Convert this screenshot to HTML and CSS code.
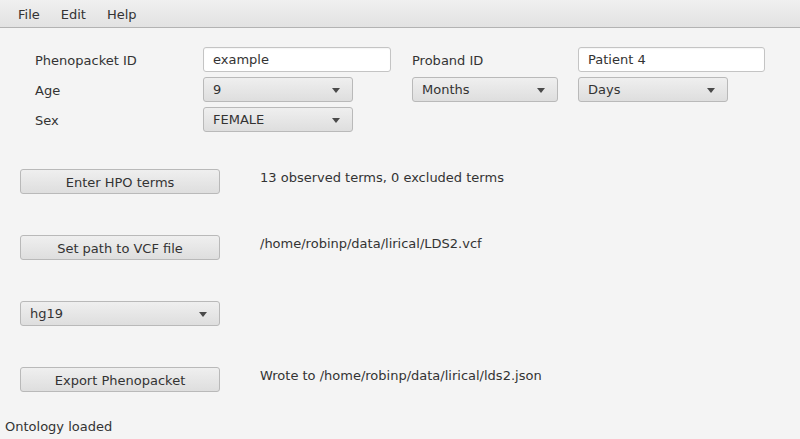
FILE: index.html
```html
<!DOCTYPE html>
<html>
<head>
<meta charset="utf-8">
<link rel="stylesheet" href="styles.css">
</head>
<body>
<div class="window">
  <div class="menubar">
    <span class="menu">File</span>
    <span class="menu">Edit</span>
    <span class="menu">Help</span>
  </div>
  <div class="content">
    <div class="form">
      <div class="label">Phenopacket ID</div>
      <div class="cell"><div class="textfield w187">example</div></div>
      <div class="label">Proband ID</div>
      <div class="cell"><div class="textfield w186">Patient 4</div></div>

      <div class="label">Age</div>
      <div class="cell"><div class="combo w149"><span>9</span><i class="arrow"></i></div></div>
      <div class="cell"><div class="combo w145"><span>Months</span><i class="arrow"></i></div></div>
      <div class="cell"><div class="combo w149"><span>Days</span><i class="arrow"></i></div></div>

      <div class="label">Sex</div>
      <div class="cell"><div class="combo w149"><span>FEMALE</span><i class="arrow"></i></div></div>
    </div>

    <div class="actions">
      <div class="action">
        <div class="button">Enter HPO terms</div>
        <div class="info">13 observed terms, 0 excluded terms</div>
      </div>
      <div class="action">
        <div class="button">Set path to VCF file</div>
        <div class="info">/home/robinp/data/lirical/LDS2.vcf</div>
      </div>
      <div class="action">
        <div class="combo w199"><span>hg19</span><i class="arrow"></i></div>
      </div>
      <div class="action">
        <div class="button">Export Phenopacket</div>
        <div class="info">Wrote to /home/robinp/data/lirical/lds2.json</div>
      </div>
    </div>
  </div>
  <div class="status">Ontology loaded</div>
</div>
</body>
</html>
```

FILE: styles.css
```css
* { box-sizing: border-box; }
html, body {
  margin: 0;
  padding: 0;
  background: #f4f4f4;
}
body {
  font-family: "DejaVu Sans", "Liberation Sans", sans-serif;
  font-size: 13px;
  color: #333333;
  width: 800px;
  height: 439px;
  overflow: hidden;
}
.window {
  position: relative;
  height: 439px;
}
.menubar {
  height: 28px;
  background: linear-gradient(to bottom, #f0f0f0, #e2e2e2);
  border-bottom: 1px solid #b3b3b3;
  display: flex;
  align-items: center;
  padding-left: 18px;
  gap: 21px;
  padding-top: 3px;
}
.menu {
  line-height: 16px;
}
.content {
  padding-left: 20px;
}
.form {
  display: grid;
  grid-template-columns: 168px 209px 166px 200px;
  grid-auto-rows: 25px;
  row-gap: 5px;
  margin-top: 19px;
  margin-left: 15px;
}
.label {
  display: flex;
  align-items: center;
  padding-top: 1px;
}
.cell {
  display: flex;
  align-items: center;
}
.textfield {
  height: 25px;
  background: #ffffff;
  border: 1px solid #c4c4c4;
  border-radius: 3px;
  box-shadow: inset 0 1px 1px rgba(0,0,0,0.04);
  padding: 0 9px;
  display: flex;
  align-items: center;
}
.combo {
  height: 25px;
  background: linear-gradient(to bottom, #efefef, #dedede);
  border: 1px solid #b9b9b9;
  border-radius: 3px;
  padding: 0 9px;
  display: flex;
  align-items: center;
  justify-content: space-between;
}
.arrow {
  width: 0;
  height: 0;
  border-left: 4px solid transparent;
  border-right: 4px solid transparent;
  border-top: 5px solid #4a4a4a;
  margin-right: 3px;
  margin-top: 1px;
}
.w187 { width: 188px; }
.w186 { width: 187px; }
.w149 { width: 150px; }
.w145 { width: 146px; }
.w199 { width: 200px; }
.actions {
  margin-top: 37px;
  display: flex;
  flex-direction: column;
  gap: 41px;
}
.action {
  display: flex;
  align-items: flex-start;
  height: 25px;
}
.button {
  width: 200px;
  height: 25px;
  background: linear-gradient(to bottom, #efefef, #dedede);
  border: 1px solid #b9b9b9;
  border-radius: 3px;
  display: flex;
  align-items: center;
  justify-content: center;
  padding-top: 1px;
}
.info {
  margin-left: 40px;
  line-height: 16px;
  margin-top: 1px;
}
.status {
  position: absolute;
  left: 5px;
  top: 419px;
  line-height: 16px;
}
```
